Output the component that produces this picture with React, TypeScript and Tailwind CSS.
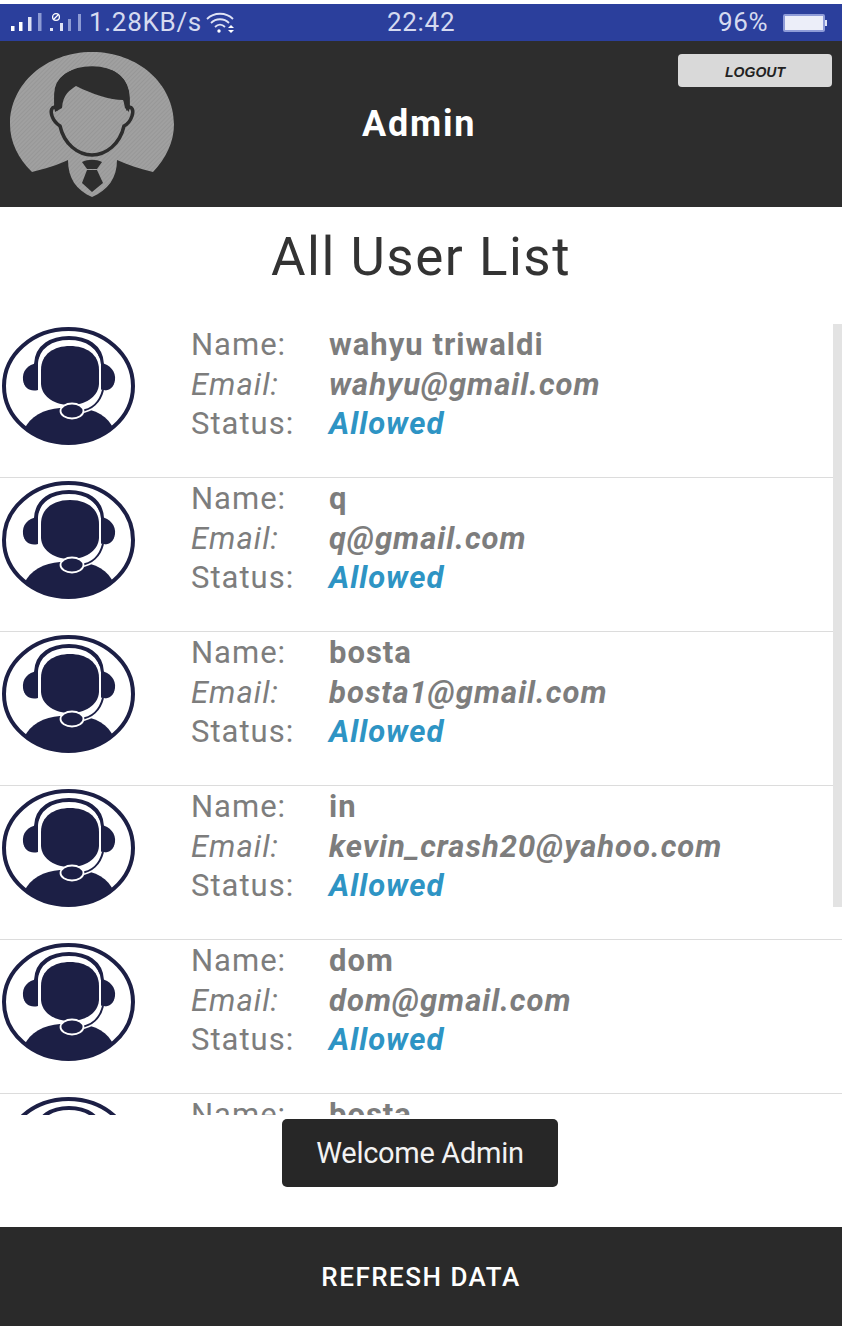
const users = [
  { name: "wahyu triwaldi", email: "wahyu@gmail.com" },
  { name: "q", email: "q@gmail.com" },
  { name: "bosta", email: "bosta1@gmail.com" },
  { name: "in", email: "kevin_crash20@yahoo.com" },
  { name: "dom", email: "dom@gmail.com" },
  { name: "bosta", email: "bosta1@gmail.com" },
];

function AgentIcon() {
  const navy = "#1c1f45";
  return (
    <svg width="135" height="120" viewBox="0 0 135 120" className="shrink-0">
      <defs>
        <clipPath id="agentClip">
          <ellipse cx="68.5" cy="60" rx="65" ry="58" />
        </clipPath>
      </defs>
      <ellipse cx="68.5" cy="60" rx="64.5" ry="57" fill="white" stroke={navy} strokeWidth="4" />
      <g clipPath="url(#agentClip)">
        <path d="M24 104 C30 90 44 83 60 82 L78 82 C96 83 108 90 114 104 L116 122 L22 122 Z" fill={navy} />
      </g>
      <path d="M38 37 C27 38 22 46 23 54 C24 62 30 66 38 64 Z" fill={navy} />
      <path d="M101 37 C110 38 116 46 115 54 C114 62 108 66 101 64 Z" fill={navy} />
      <path d="M36 38 C37 20 52 12 69 12 C86 12 101 20 102 38" fill="none" stroke={navy} strokeWidth="4" />
      <path d="M39 64 L39 38 C40 24 54 16 69 16 C84 16 99 24 100 38 L100 64" fill="none" stroke="white" strokeWidth="1.8" />
      <path d="M41 44 C41 28 54 20 70 20 C86 20 99 28 99 44 L99 58 C98 72 84 79 70 79 C56 79 42 72 41 58 Z" fill={navy} />
      <path d="M103 64 C100 76 92 84 80 85" fill="none" stroke="white" strokeWidth="5" />
      <path d="M103 64 C100 76 92 84 80 85" fill="none" stroke={navy} strokeWidth="2" />
      <ellipse cx="72" cy="85" rx="11.5" ry="7.5" fill={navy} stroke="white" strokeWidth="1.8" />
    </svg>
  );
}

function AdminAvatar() {
  const dark = "#2d2d2d";
  return (
    <svg width="166" height="150" viewBox="0 0 166 150" className="shrink-0">
      <defs>
        <pattern id="hatch" width="3" height="3" patternUnits="userSpaceOnUse" patternTransform="rotate(45)">
          <rect width="3" height="3" fill="#a0a0a0" />
          <rect width="1" height="3" fill="#979797" />
        </pattern>
      </defs>
      <path
        d="M22 120 C8 106 0 90 0 72 C0 32 36 0 82 0 C128 0 164 32 164 72 C164 90 156 106 143 120 C130 117 118 113 107 108 C107 126 98 138 82 145 C66 138 58 126 58 108 C48 113 34 117 22 120 Z"
        fill="url(#hatch)"
      />
      <path
        d="M46 42 C46 26 62 16 82 16 C104 16 118 28 118 46 L118 56 C122 54 124 58 122 64 C120 70 118 72 114 74 C110 92 96 103 82 103 C68 103 54 92 50 74 C47 72 44 70 42 64 C40 58 42 54 46 56 Z"
        fill="url(#hatch)"
        stroke={dark}
        strokeWidth="3.5"
      />
      <path
        d="M45 60 C43 40 45 28 57 21 C68 14 95 13 107 21 C118 28 121 42 119 60 L115 56 C114 52 114 50 113 48 C100 48 82 42 66 34 C60 38 53 42 52 56 Z"
        fill={dark}
      />
      <path d="M72 110 C78 107 86 107 92 110 L87 117 L77 117 Z" fill={dark} />
      <path d="M77 118 L87 118 L93 131 L82 140 L72 131 Z" fill={dark} />
    </svg>
  );
}

function UserRow({ name, email }: { name: string; email: string }) {
  return (
    <div className="flex h-[154px] shrink-0 border-b border-[#dcdcdc]">
      <div className="pt-[2px]">
        <AgentIcon />
      </div>
      <div className="ml-[56px] flex flex-col pt-[1px] text-[31px] leading-[39.5px] tracking-[1px] text-[#7d7d7d]">
        <div className="flex">
          <span className="w-[138px]">Name:</span>
          <span className="font-bold">{name}</span>
        </div>
        <div className="flex">
          <span className="w-[138px] italic">Email:</span>
          <span className="font-bold italic">{email}</span>
        </div>
        <div className="flex">
          <span className="w-[138px]">Status:</span>
          <span className="font-bold italic text-[#2e94c4]">Allowed</span>
        </div>
      </div>
    </div>
  );
}

function StatusBar() {
  return (
    <div className="flex h-[37px] shrink-0 items-center bg-[#2b3f9c] pl-[11px] text-[26px] tracking-[0.7px] text-[#d5daf0]">
      <svg width="70" height="24" viewBox="0 0 70 24" className="shrink-0">
        <rect x="0" y="15" width="3.5" height="5" fill="#fff" />
        <rect x="8" y="11" width="3.5" height="9" fill="#fff" />
        <rect x="17" y="6" width="3.5" height="14" fill="#dfe3f5" />
        <rect x="27" y="2" width="3.5" height="18" fill="#8d9bd4" />
        <circle cx="45" cy="6" r="3.4" fill="none" stroke="#fff" strokeWidth="1.3" />
        <path d="M42.5 8.5 L47.5 3.5" stroke="#fff" strokeWidth="1.2" />
        <rect x="39" y="17" width="3" height="3" fill="#dfe3f5" />
        <rect x="49" y="12" width="3" height="8" fill="#dfe3f5" />
        <rect x="57" y="8" width="3" height="12" fill="#8d9bd4" />
        <rect x="67" y="3" width="3" height="17" fill="#8d9bd4" />
      </svg>
      <span className="ml-[8px] w-[113px] shrink-0 whitespace-nowrap">1.28KB/s</span>
      <svg width="30" height="22" viewBox="0 0 30 22" className="ml-[4px] shrink-0" fill="none" stroke="#dfe3f5" strokeWidth="1.8">
        <path d="M1 7 C8 0 20 0 27 7" />
        <path d="M5 11 C10 6 18 6 23 11" />
        <path d="M9 15 C12 12 16 12 19 15" />
        <circle cx="13" cy="19" r="1.7" fill="#fff" stroke="none" />
        <path d="M25 13 L22 16 L28 16 Z" fill="#fff" stroke="none" />
        <path d="M25 21 L22 18 L28 18 Z" fill="#fff" stroke="none" />
      </svg>
      <span className="ml-[151px] w-[331px] shrink-0">22:42</span>
      <span className="w-[65px] shrink-0">96%</span>
      <div className="flex items-center">
        <div className="h-[18px] w-[42px] rounded-[2px] border-2 border-[#8f9cd8] bg-[#eceef9]" />
        <div className="h-[6px] w-[2px] bg-[#dfe3f5]" />
      </div>
    </div>
  );
}

export default function App() {
  return (
    <div className="relative flex h-[1326px] w-[842px] flex-col overflow-hidden bg-white font-['Roboto',sans-serif]">
      <div className="h-[4px] shrink-0 bg-white" />
      <StatusBar />
      <header className="relative flex h-[166px] shrink-0 items-center bg-[#2d2d2d]">
        <div className="ml-[10px] mt-[11px] self-start">
          <AdminAvatar />
        </div>
        <h1 className="ml-[186px] text-[36px] font-bold tracking-[1.8px] text-white">Admin</h1>
        <button className="absolute left-[678px] top-[13px] flex h-[33px] w-[154px] items-center justify-center rounded-[4px] bg-[#d9d9d9] pt-[3px] font-['Liberation_Sans',sans-serif] text-[14px] font-bold italic text-[#222]">
          LOGOUT
        </button>
      </header>
      <h2 className="flex h-[117px] shrink-0 items-start justify-center pt-[17px] text-[53px] font-normal leading-[66px] tracking-[1.5px] text-[#333]">
        All User List
      </h2>
      <div className="relative h-[791px] shrink-0 overflow-hidden">
        {users.map((u, i) => (
          <UserRow key={i} name={u.name} email={u.email} />
        ))}
        <div className="absolute right-0 top-0 h-[583px] w-[9px] bg-[#e3e3e3]" />
      </div>
      <div className="flex-1" />
      <footer className="flex h-[99px] shrink-0 items-center justify-center bg-[#2a2a2a] pt-[1px] text-[26px] font-medium tracking-[1.5px] text-white">
        REFRESH DATA
      </footer>
      <div className="absolute left-[282px] top-[1119px] flex h-[68px] w-[276px] items-center justify-center rounded-[5px] bg-[#272727] pt-[2px] text-[29px] tracking-[-0.3px] text-[#f2f2f2]">
        Welcome Admin
      </div>
    </div>
  );
}
